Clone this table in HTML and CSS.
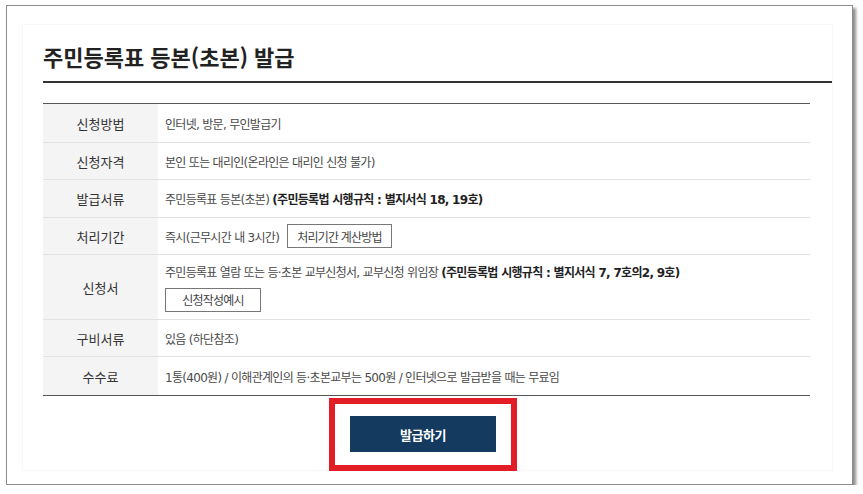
FILE: index.html
```html
<!DOCTYPE html>
<html lang="ko">
  <head>
    <meta charset="UTF-8" />
    <title>주민등록표 등본(초본) 발급</title>
    <link rel="stylesheet" href="styles.css">
  </head>
  <body>

    <div class="panel">
      <div class="frame">

        <!-- Title -->
        <h1 class="title">주민등록표 등본(초본) 발급</h1>

        <!-- Info table -->
        <div class="info">
          <div class="row">
            <div class="th">신청방법</div>
            <div class="td">인터넷, 방문, 무인발급기</div>
          </div>
          <div class="row">
            <div class="th">신청자격</div>
            <div class="td">본인 또는 대리인(온라인은 대리인 신청 불가)</div>
          </div>
          <div class="row">
            <div class="th">발급서류</div>
            <div class="td">
              <span>주민등록표 등본(초본) <b>(주민등록법 시행규칙 : 별지서식 18, 19호)</b></span>
            </div>
          </div>
          <div class="row">
            <div class="th">처리기간</div>
            <div class="td inline">
              <span>즉시(근무시간 내 3시간)</span>
              <button class="btn-line">처리기간 계산방법</button>
            </div>
          </div>
          <div class="row tall">
            <div class="th">신청서</div>
            <div class="td stack">
              <span>주민등록표 열람 또는 등·초본 교부신청서, 교부신청 위임장 <b>(주민등록법 시행규칙 : 별지서식 7, 7호의2, 9호)</b></span>
              <button class="btn-line wide">신청작성예시</button>
            </div>
          </div>
          <div class="row">
            <div class="th">구비서류</div>
            <div class="td">있음 (하단참조)</div>
          </div>
          <div class="row last">
            <div class="th">수수료</div>
            <div class="td">1통(400원) / 이해관계인의 등·초본교부는 500원 / 인터넷으로 발급받을 때는 무료임</div>
          </div>
        </div>

        <!-- Issue button, marked with a red box -->
        <div class="action">
          <div class="highlight">
            <button class="btn-issue">발급하기</button>
          </div>
        </div>

      </div>
    </div>

  </body>
</html>
```

FILE: styles.css
```css
* {
  box-sizing: border-box;
}

body {
  margin: 0;
  background: #fff;
  font-family: "Noto Sans CJK KR", "Noto Sans", sans-serif;
  color: #444;
}

.panel {
  margin: 5px 0 0 6px;
  width: 847px;
  height: 480px;
  border: 1px solid #8c8c8c;
  box-shadow: 3px 3px 3px rgba(0, 0, 0, 0.45);
  padding: 18px 19px 0 15px;
  background: #fff;
}

.frame {
  height: 447px;
  border: 1px solid #f8f8f8;
  padding: 0 0 0 20px;
}

.title {
  margin: 16px 0 0;
  padding-bottom: 10px;
  border-bottom: 2px solid #333;
  font-size: 22px;
  line-height: 30px;
  font-weight: bold;
  color: #222;
}

.info {
  margin-top: 20px;
  width: 767px;
  border-top: 1px solid #555;
  border-bottom: 1px solid #555;
}

.row {
  display: flex;
  min-height: 37px;
  border-top: 1px solid #e2e2e2;
}

.row:first-child {
  min-height: 38px;
  border-top: none;
}

.row:nth-child(3) {
  min-height: 38px;
}

.row.tall {
  min-height: 65px;
}

.row.last {
  min-height: 39px;
}

.row .th {
  width: 115px;
  flex-shrink: 0;
  display: flex;
  align-items: center;
  justify-content: center;
  background: #f4f4f4;
  font-size: 13px;
  color: #333;
}

.row .td {
  flex: 1;
  display: flex;
  align-items: center;
  padding: 0 7px;
  font-family: "DejaVu Sans", "Noto Sans CJK KR", sans-serif;
  font-size: 12px;
  letter-spacing: -0.7px;
  color: #4a4a4a;
}

.row .td b {
  color: #222;
}

.row .td.inline {
  gap: 8px;
}

.row .td.stack {
  flex-direction: column;
  align-items: flex-start;
  justify-content: center;
  gap: 8px;
}

.btn-line {
  height: 24px;
  padding: 0 9px;
  border: 1px solid #777;
  background: #fff;
  font-family: "Noto Sans CJK KR", sans-serif;
  font-size: 12px;
  letter-spacing: -0.8px;
  color: #444;
}

.btn-line.wide {
  width: 96px;
  padding: 0;
}

.action {
  width: 760px;
  display: flex;
  justify-content: center;
  margin-top: 2px;
}

.highlight {
  border: 6px solid #e31d25;
  padding: 12px 15px 13px;
}

.btn-issue {
  display: block;
  width: 146px;
  height: 36px;
  border: none;
  background-color: #153a5f;
  color: #fff;
  font-family: inherit;
  font-size: 13px;
  font-weight: bold;
  letter-spacing: -0.5px;
}
```
